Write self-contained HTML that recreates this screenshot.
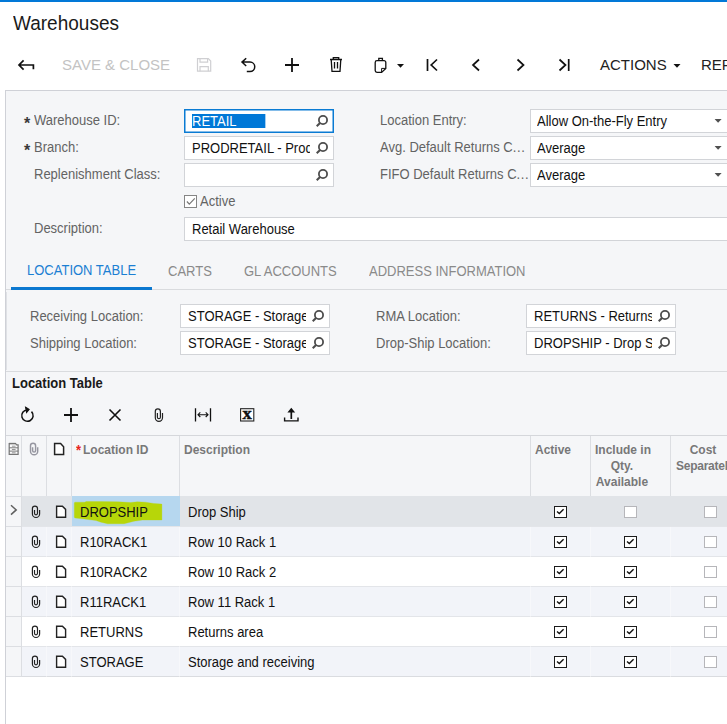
<!DOCTYPE html>
<html lang="en">
<head>
<meta charset="utf-8">
<title>Warehouses</title>
<style>
*{box-sizing:border-box;margin:0;padding:0}
html,body{width:727px;height:724px;overflow:hidden;background:#fff}
body{position:relative;font-family:"Liberation Sans",Arial,sans-serif;font-size:14px;color:#111}
.abs{position:absolute}
.t{position:absolute;white-space:nowrap;line-height:16px;font-size:14px;transform:scaleX(.9286);transform-origin:0 0}
#topbar{left:0;top:0;width:727px;height:2px;background:#0278d7}
#title{left:13px;top:10.5px;font-size:19.7px;line-height:24px;color:#1a1a1a;transform:scaleX(.965)}
.tb{font-size:15px;line-height:18px;top:56px;color:#222;transform:none}
.dis{color:#c3c3c3}
#panel{left:5px;top:90px;width:730px;height:640px;background:#f5f6f8;border:1px solid #cfd1d7}
.lbl{color:#636363}
.inp{position:absolute;height:24px;background:#fff;border:1px solid #d2d4d8;overflow:hidden}
.inp span{position:absolute;left:7px;top:3px;white-space:nowrap;line-height:16px;color:#111;font-size:14px;transform:scaleX(.9286);transform-origin:0 0}
.mag{position:absolute;right:3px;top:4px;width:14px;height:14px}
.tab{color:#8a8a8a;top:263px}
.gh{position:absolute;font-weight:bold;font-size:13px;line-height:16px;color:#787878;white-space:nowrap;transform:scaleX(.923);transform-origin:0 0}
.vsep{position:absolute;width:1px;background:#dcdee2}
.row{position:absolute;left:22px;width:710px;height:30px}
.cell{position:absolute;white-space:nowrap;line-height:16px;font-size:14px;color:#111;transform:scaleX(.9286);transform-origin:0 0}
.cb{position:absolute;width:12.6px;height:12.2px;background:#fff;border:1.2px solid #b6b6ba}
.cb.on{border:1.5px solid #1c1c1c}
</style>
</head>
<body>
<div id="topbar" class="abs"></div>
<div id="title" class="t">Warehouses</div>

<!-- main toolbar -->
<div class="t tb dis" style="left:62px">SAVE &amp; CLOSE</div>
<div class="t tb" style="left:600px">ACTIONS</div>
<div class="t tb" style="left:701px">REPORTS</div>


<!-- main toolbar icons -->
<svg class="abs" style="left:0;top:50px" width="727" height="30" viewBox="0 50 727 30" fill="none" stroke="#111" stroke-width="1.7">
<path d="M23.6 60.4 L19 65 L23.6 69.6 M19 65 H33.4 V69.2"/>
<g stroke="#cfcfd2" stroke-width="1.2"><path d="M197.5 58.6 H208.3 L210.7 61 V71.2 H197.5 Z"/><path d="M200 58.6 V62.2 H207.6 V58.6"/><path d="M200 71.2 V66.6 H208.3 V71.2"/></g>
<path d="M246.2 58.2 L242 62.1 L246.2 66 M242 62.1 H250 A4.75 4.75 0 0 1 250 71.6 H246.8" stroke-width="1.5"/>
<path d="M285 65 H299 M292 58 V72" stroke-width="1.8"/>
<g stroke-width="1.3"><path d="M330 59.5 H342 M333.3 59.5 V57.6 H338.7 V59.5 M331.2 59.5 L332 71.3 H340 L340.8 59.5 M334.5 62 V68.6 M337.5 62 V68.6"/></g>
<g stroke-width="1.3"><path d="M377 60.6 H384 A1.8 1.8 0 0 1 385.8 62.4 V68.4 L381.6 72.4 H377 A1.8 1.8 0 0 1 375.2 70.6 V62.4 A1.8 1.8 0 0 1 377 60.6 Z"/><path d="M378.8 60.6 V58.4 H382.4 V60.6"/><path d="M385.8 68.4 H381.6 V72.4" stroke-width="1"/></g>
<path d="M397 64 H404 L400.5 67.7 Z" fill="#111" stroke="none"/>
<path d="M427.5 59 V71 M437 59.5 L431.2 65 L437 70.5"/>
<path d="M479 59.5 L473 65 L479 70.5"/>
<path d="M517.5 59.5 L523.5 65 L517.5 70.5"/>
<path d="M559.5 59.5 L565.5 65 L559.5 70.5 M568.7 59 V71"/>
<path d="M673.5 64 H680.5 L677 67.7 Z" fill="#111" stroke="none"/>
</svg>
<div id="panel" class="abs"></div>
<svg width="0" height="0" style="position:absolute"><defs>
<g id="mag"><circle cx="7" cy="5.95" r="4.1" fill="none" stroke="#4d4d4d" stroke-width="1.8"/><path d="M4.3 8.7 L0.7 12.3" stroke="#4d4d4d" stroke-width="2.1" stroke-linecap="butt"/></g>
</defs></svg>

<!-- header form -->
<div class="t lbl" style="left:24px;top:116px;font-size:16px;font-weight:bold;color:#3a3a3a;transform:none">*</div>
<div class="t lbl" style="left:34px;top:112px">Warehouse ID:</div>
<div class="t lbl" style="left:24px;top:143px;font-size:16px;font-weight:bold;color:#3a3a3a;transform:none">*</div>
<div class="t lbl" style="left:34px;top:139px">Branch:</div>
<div class="t lbl" style="left:34px;top:166px">Replenishment Class:</div>
<div class="t lbl" style="left:34px;top:220px">Description:</div>

<div class="inp" style="left:184px;top:109px;width:150px;border-color:#0a7bd3;box-shadow:inset 0 0 0 0.5px #0a7bd3"><span><b style="font-weight:normal;background:#0078d7;color:#fff;display:inline-block;width:78.6px;height:14px;line-height:14px;margin-top:1px;white-space:pre">RETAIL</b></span><svg class="mag" viewBox="0 0 14 14"><use href="#mag"/></svg></div>
<div class="inp" style="left:184px;top:136px;width:150px"><span style="width:127.1px;overflow:hidden">PRODRETAIL - Prod</span><svg class="mag" viewBox="0 0 14 14"><use href="#mag"/></svg></div>
<div class="inp" style="left:184px;top:163px;width:150px"><svg class="mag" viewBox="0 0 14 14"><use href="#mag"/></svg></div>
<div class="cb" style="left:184px;top:195px;width:12.8px;height:12.8px;border:1.1px solid #858585"><svg viewBox="0 0 12.8 12.8" width="12.8" height="12.8" style="position:absolute;left:-1.1px;top:-1.1px"><path d="M2.9 6.5 L5.3 9.2 L10.8 3.4" fill="none" stroke="#777" stroke-width="1.2"/></svg></div>
<div class="t lbl" style="left:200px;top:193px">Active</div>
<div class="inp" style="left:184px;top:217px;width:560px"><span>Retail Warehouse</span></div>

<div class="t lbl" style="left:380px;top:112px">Location Entry:</div>
<div class="t lbl" style="left:380px;top:139px">Avg. Default Returns C<i style="font-style:normal;letter-spacing:0.7px">...</i></div>
<div class="t lbl" style="left:380px;top:166px">FIFO Default Returns C<i style="font-style:normal;letter-spacing:0.7px">...</i></div>
<div class="inp" style="left:530px;top:109px;width:210px"><span style="left:6px">Allow On-the-Fly Entry</span></div>
<div class="inp" style="left:530px;top:136px;width:210px"><span style="left:6px">Average</span></div>
<div class="inp" style="left:530px;top:163px;width:210px"><span style="left:6px">Average</span></div>
<svg class="abs" style="left:714px;top:119px" width="8" height="5" viewBox="0 0 8 5"><path d="M0.6 0 H7.6 L4.1 3.7 Z" fill="#505050"/></svg>
<svg class="abs" style="left:714px;top:146px" width="8" height="5" viewBox="0 0 8 5"><path d="M0.6 0 H7.6 L4.1 3.7 Z" fill="#505050"/></svg>
<svg class="abs" style="left:714px;top:173px" width="8" height="5" viewBox="0 0 8 5"><path d="M0.6 0 H7.6 L4.1 3.7 Z" fill="#505050"/></svg>

<!-- tabs -->
<div class="abs" style="left:6px;top:289px;width:730px;height:1px;background:#d9dbde"></div>
<div class="abs" style="left:11px;top:287px;width:141px;height:3px;background:#0b78d0"></div>
<div class="t tab" style="left:27px;top:262px;color:#1b7fd3">LOCATION TABLE</div>
<div class="t tab" style="left:168px">CARTS</div>
<div class="t tab" style="left:244px">GL ACCOUNTS</div>
<div class="t tab" style="left:369px">ADDRESS INFORMATION</div>

<!-- tab form -->
<div class="abs" style="left:6px;top:292px;width:1px;height:78px;background:#dfe1e5"></div>
<div class="t lbl" style="left:30px;top:308px">Receiving Location:</div>
<div class="t lbl" style="left:30px;top:335px">Shipping Location:</div>
<div class="t lbl" style="left:376px;top:308px">RMA Location:</div>
<div class="t lbl" style="left:376px;top:335px">Drop-Ship Location:</div>
<div class="inp" style="left:180px;top:304px;width:150px"><span style="width:127.1px;overflow:hidden">STORAGE - Storage</span><svg class="mag" viewBox="0 0 14 14"><use href="#mag"/></svg></div>
<div class="inp" style="left:180px;top:331px;width:150px"><span style="width:127.1px;overflow:hidden">STORAGE - Storage</span><svg class="mag" viewBox="0 0 14 14"><use href="#mag"/></svg></div>
<div class="inp" style="left:526px;top:304px;width:150px"><span style="width:127.1px;overflow:hidden">RETURNS - Returns</span><svg class="mag" viewBox="0 0 14 14"><use href="#mag"/></svg></div>
<div class="inp" style="left:526px;top:331px;width:150px"><span style="width:127.1px;overflow:hidden">DROPSHIP - Drop Ship</span><svg class="mag" viewBox="0 0 14 14"><use href="#mag"/></svg></div>
<div class="abs" style="left:6px;top:371px;width:730px;height:1px;background:#d9dbde"></div>
<div class="t" style="left:12px;top:375px;font-weight:bold;color:#1a1a1a">Location Table</div>


<!-- grid toolbar -->
<svg class="abs" style="left:0;top:400px" width="320" height="30" viewBox="0 400 320 30" fill="none" stroke="#111" stroke-width="1.6">
<path d="M31.5 411.6 A5.7 5.7 0 1 1 27.2 409.9" stroke-width="1.5"/><path d="M25.6 407.3 L29.1 409.4 L26.6 412.4 Z" stroke-width="1.1" fill="#111"/>
<path d="M64 415 H78 M71 408 V422" stroke-width="1.8"/>
<path d="M109.5 409.5 L120.5 420.5 M120.5 409.5 L109.5 420.5"/>
<path d="M162.50 413.00 V417.80 A3.6 3.6 0 0 1 155.30 417.80 V411.50 A2.55 2.55 0 0 1 160.40 411.50 V417.20 A1.5 1.5 0 0 1 157.40 417.20 V413.00" stroke-width="1.2" stroke="#222"/>
<path d="M195.5 408.2 V421.4 M210.5 408.2 V421.4" stroke-width="1.3"/><path d="M198 414.7 H208 M200.3 412.4 L198 414.7 L200.3 417 M205.7 412.4 L208 414.7 L205.7 417" stroke-width="1.1"/>
<rect x="240.6" y="408.7" width="13.2" height="12.3" stroke-width="1.1" stroke="#222" fill="#fff"/>
<text x="247.2" y="419" text-anchor="middle" transform="translate(247.2 0) scale(1.06 1) translate(-247.2 0)" font-family="Liberation Serif, serif" font-weight="bold" font-size="17.5" fill="#111" stroke="#111" stroke-width="0.45">x</text>
<path d="M291.3 411 V419" stroke-width="1.7"/><path d="M291.3 407.8 L295.2 412.6 H287.4 Z" fill="#111" stroke="none"/><path d="M284.6 417.4 V420.9 H298 V417.4" stroke-width="1.4"/>
</svg>

<!-- grid -->
<div class="abs" style="left:6px;top:435px;width:730px;height:1px;background:#d5d7db"></div>
<div class="abs" style="left:6px;top:496px;width:730px;height:181px;background:#fff"></div>
<div class="abs" style="left:6px;top:677px;width:730px;height:60px;background:#fff"></div>
<div class="abs" style="left:6px;top:496px;width:15px;height:181px;background:#f5f6f8"></div>
<div class="vsep" style="left:21px;top:436px;height:60px"></div>
<div class="vsep" style="left:46px;top:436px;height:60px"></div>
<div class="vsep" style="left:71px;top:436px;height:60px"></div>
<div class="vsep" style="left:179px;top:436px;height:60px"></div>
<div class="vsep" style="left:530px;top:436px;height:60px"></div>
<div class="vsep" style="left:590px;top:436px;height:60px"></div>
<div class="vsep" style="left:670px;top:436px;height:60px"></div>
<div class="gh" style="left:76px;top:442px;color:#e8241c;font-size:14px">*</div>
<div class="gh" style="left:83px;top:442px">Location ID</div>
<div class="gh" style="left:184px;top:442px">Description</div>
<div class="gh" style="left:535px;top:442px">Active</div>
<div class="gh" style="left:594.5px;top:442px;width:58.5px;text-align:center">Include in<br>Qty.<br>Available</div>
<div class="gh" style="left:676px;top:442px;width:58.5px;text-align:center">Cost</div>
<div class="gh" style="left:676px;top:458px;letter-spacing:-0.27px">Separately</div>
<svg class="abs" style="left:0;top:438px" width="72" height="22" viewBox="0 438 72 22" fill="none">
<g stroke="#757575" stroke-width="1.2"><path d="M9.2 443.5 H15.6 L16.6 444.8 H18.1 V454.4 H9.2 Z" fill="#fdfdfe"/><path d="M9 443.6 H15.8" stroke-width="1.5"/><path d="M9.2 447.8 H18.1 M9.2 451.1 H18.1" stroke-width="1"/><path d="M11.9 446.2 H15.6 M11.9 449.5 H15.6 M11.9 452.8 H15.6" stroke-width="0.9" stroke="#8a8a8a"/></g>
<path d="M37.70 447.20 V451.20 A3.6 3.6 0 0 1 30.50 451.20 V445.70 A2.55 2.55 0 0 1 35.60 445.70 V450.60 A1.5 1.5 0 0 1 32.60 450.60 V447.20" stroke="#9696a0" stroke-width="1.45"/>
<path d="M54.6 443.6 H60.6 L63.6 446.8 V454.5 H54.6 Z" fill="#fff" stroke="#222" stroke-width="1.5"/>
</svg>
<div class="row" style="top:496px;background:#e1e4e8"><div class="abs" style="left:50px;top:0;width:108px;height:30px;background:#b6d7ef"></div><svg class="abs" style="left:50px;top:0" width="108" height="30" viewBox="72 496 108 30"><path d="M74.3 503 Q74.3 502.2 75.2 502.2 L84.5 502.2 L86.2 501.5 L100 501.6 L118 501.8 L130.7 502.5 L137.3 501.8 L145.6 502.2 L153.8 503.5 L161.9 504.1 L161.9 520 L142.3 520.1 L134 521.2 L128 522.8 L124.1 523.7 L107.6 523.8 L101 522.2 L96 520.5 L84.5 519.1 L75.4 518.1 Q74.3 518 74.3 517 Z" fill="#b7d609" stroke="#b7d609" stroke-width="0.3" stroke-linejoin="round"/></svg><div class="cell" style="left:58px;top:8px">DROPSHIP</div><div class="cell" style="left:166px;top:8px">Drop Ship</div><div class="cb on" style="left:532.1px;top:10px"><svg viewBox="0 0 12.6 12.2" width="12.6" height="12.2" style="position:absolute;left:-1.5px;top:-1.5px"><path d="M3.0 5.6 L5.3 7.6 L9.6 3.3" fill="none" stroke="#111" stroke-width="1.4"/></svg></div><div class="cb" style="left:602.2px;top:10px"></div><div class="cb" style="left:682.2px;top:10px"></div><svg class="abs" style="left:0;top:0" width="50" height="30" viewBox="22 0 50 30" fill="none"><path d="M39.60 14.10 V17.90 A3.6 3.6 0 0 1 32.40 17.90 V12.60 A2.55 2.55 0 0 1 37.50 12.60 V17.30 A1.5 1.5 0 0 1 34.50 17.30 V14.10" stroke="#222" stroke-width="1.2"/><path d="M56.6 10.2 H62.4 L65.6 13.4 V21.2 H56.6 Z" fill="#fff" stroke="#222" stroke-width="1.4"/></svg></div>
<div class="row" style="top:526px;background:#f2f4f9"><div class="cell" style="left:58px;top:8px">R10RACK1</div><div class="cell" style="left:166px;top:8px">Row 10 Rack 1</div><div class="cb on" style="left:532.1px;top:10px"><svg viewBox="0 0 12.6 12.2" width="12.6" height="12.2" style="position:absolute;left:-1.5px;top:-1.5px"><path d="M3.0 5.6 L5.3 7.6 L9.6 3.3" fill="none" stroke="#111" stroke-width="1.4"/></svg></div><div class="cb on" style="left:602.2px;top:10px"><svg viewBox="0 0 12.6 12.2" width="12.6" height="12.2" style="position:absolute;left:-1.5px;top:-1.5px"><path d="M3.0 5.6 L5.3 7.6 L9.6 3.3" fill="none" stroke="#111" stroke-width="1.4"/></svg></div><div class="cb" style="left:682.2px;top:10px"></div><svg class="abs" style="left:0;top:0" width="50" height="30" viewBox="22 0 50 30" fill="none"><path d="M39.60 14.10 V17.90 A3.6 3.6 0 0 1 32.40 17.90 V12.60 A2.55 2.55 0 0 1 37.50 12.60 V17.30 A1.5 1.5 0 0 1 34.50 17.30 V14.10" stroke="#222" stroke-width="1.2"/><path d="M56.6 10.2 H62.4 L65.6 13.4 V21.2 H56.6 Z" fill="#fff" stroke="#222" stroke-width="1.4"/></svg></div>
<div class="row" style="top:556px;background:#ffffff"><div class="cell" style="left:58px;top:8px">R10RACK2</div><div class="cell" style="left:166px;top:8px">Row 10 Rack 2</div><div class="cb on" style="left:532.1px;top:10px"><svg viewBox="0 0 12.6 12.2" width="12.6" height="12.2" style="position:absolute;left:-1.5px;top:-1.5px"><path d="M3.0 5.6 L5.3 7.6 L9.6 3.3" fill="none" stroke="#111" stroke-width="1.4"/></svg></div><div class="cb on" style="left:602.2px;top:10px"><svg viewBox="0 0 12.6 12.2" width="12.6" height="12.2" style="position:absolute;left:-1.5px;top:-1.5px"><path d="M3.0 5.6 L5.3 7.6 L9.6 3.3" fill="none" stroke="#111" stroke-width="1.4"/></svg></div><div class="cb" style="left:682.2px;top:10px"></div><svg class="abs" style="left:0;top:0" width="50" height="30" viewBox="22 0 50 30" fill="none"><path d="M39.60 14.10 V17.90 A3.6 3.6 0 0 1 32.40 17.90 V12.60 A2.55 2.55 0 0 1 37.50 12.60 V17.30 A1.5 1.5 0 0 1 34.50 17.30 V14.10" stroke="#222" stroke-width="1.2"/><path d="M56.6 10.2 H62.4 L65.6 13.4 V21.2 H56.6 Z" fill="#fff" stroke="#222" stroke-width="1.4"/></svg></div>
<div class="row" style="top:586px;background:#f2f4f9"><div class="cell" style="left:58px;top:8px">R11RACK1</div><div class="cell" style="left:166px;top:8px">Row 11 Rack 1</div><div class="cb on" style="left:532.1px;top:10px"><svg viewBox="0 0 12.6 12.2" width="12.6" height="12.2" style="position:absolute;left:-1.5px;top:-1.5px"><path d="M3.0 5.6 L5.3 7.6 L9.6 3.3" fill="none" stroke="#111" stroke-width="1.4"/></svg></div><div class="cb on" style="left:602.2px;top:10px"><svg viewBox="0 0 12.6 12.2" width="12.6" height="12.2" style="position:absolute;left:-1.5px;top:-1.5px"><path d="M3.0 5.6 L5.3 7.6 L9.6 3.3" fill="none" stroke="#111" stroke-width="1.4"/></svg></div><div class="cb" style="left:682.2px;top:10px"></div><svg class="abs" style="left:0;top:0" width="50" height="30" viewBox="22 0 50 30" fill="none"><path d="M39.60 14.10 V17.90 A3.6 3.6 0 0 1 32.40 17.90 V12.60 A2.55 2.55 0 0 1 37.50 12.60 V17.30 A1.5 1.5 0 0 1 34.50 17.30 V14.10" stroke="#222" stroke-width="1.2"/><path d="M56.6 10.2 H62.4 L65.6 13.4 V21.2 H56.6 Z" fill="#fff" stroke="#222" stroke-width="1.4"/></svg></div>
<div class="row" style="top:616px;background:#ffffff"><div class="cell" style="left:58px;top:8px">RETURNS</div><div class="cell" style="left:166px;top:8px">Returns area</div><div class="cb on" style="left:532.1px;top:10px"><svg viewBox="0 0 12.6 12.2" width="12.6" height="12.2" style="position:absolute;left:-1.5px;top:-1.5px"><path d="M3.0 5.6 L5.3 7.6 L9.6 3.3" fill="none" stroke="#111" stroke-width="1.4"/></svg></div><div class="cb on" style="left:602.2px;top:10px"><svg viewBox="0 0 12.6 12.2" width="12.6" height="12.2" style="position:absolute;left:-1.5px;top:-1.5px"><path d="M3.0 5.6 L5.3 7.6 L9.6 3.3" fill="none" stroke="#111" stroke-width="1.4"/></svg></div><div class="cb" style="left:682.2px;top:10px"></div><svg class="abs" style="left:0;top:0" width="50" height="30" viewBox="22 0 50 30" fill="none"><path d="M39.60 14.10 V17.90 A3.6 3.6 0 0 1 32.40 17.90 V12.60 A2.55 2.55 0 0 1 37.50 12.60 V17.30 A1.5 1.5 0 0 1 34.50 17.30 V14.10" stroke="#222" stroke-width="1.2"/><path d="M56.6 10.2 H62.4 L65.6 13.4 V21.2 H56.6 Z" fill="#fff" stroke="#222" stroke-width="1.4"/></svg></div>
<div class="row" style="top:646px;background:#f2f4f9"><div class="cell" style="left:58px;top:8px">STORAGE</div><div class="cell" style="left:166px;top:8px">Storage and receiving</div><div class="cb on" style="left:532.1px;top:10px"><svg viewBox="0 0 12.6 12.2" width="12.6" height="12.2" style="position:absolute;left:-1.5px;top:-1.5px"><path d="M3.0 5.6 L5.3 7.6 L9.6 3.3" fill="none" stroke="#111" stroke-width="1.4"/></svg></div><div class="cb on" style="left:602.2px;top:10px"><svg viewBox="0 0 12.6 12.2" width="12.6" height="12.2" style="position:absolute;left:-1.5px;top:-1.5px"><path d="M3.0 5.6 L5.3 7.6 L9.6 3.3" fill="none" stroke="#111" stroke-width="1.4"/></svg></div><div class="cb" style="left:682.2px;top:10px"></div><svg class="abs" style="left:0;top:0" width="50" height="30" viewBox="22 0 50 30" fill="none"><path d="M39.60 14.10 V17.90 A3.6 3.6 0 0 1 32.40 17.90 V12.60 A2.55 2.55 0 0 1 37.50 12.60 V17.30 A1.5 1.5 0 0 1 34.50 17.30 V14.10" stroke="#222" stroke-width="1.2"/><path d="M56.6 10.2 H62.4 L65.6 13.4 V21.2 H56.6 Z" fill="#fff" stroke="#222" stroke-width="1.4"/></svg></div>
<div class="abs" style="left:22px;top:526px;width:710px;height:1px;background:#e3e5e9"></div>
<div class="abs" style="left:6px;top:526px;width:16px;height:1px;background:#dcdee2"></div>
<div class="abs" style="left:22px;top:556px;width:710px;height:1px;background:#e3e5e9"></div>
<div class="abs" style="left:6px;top:556px;width:16px;height:1px;background:#dcdee2"></div>
<div class="abs" style="left:22px;top:586px;width:710px;height:1px;background:#e3e5e9"></div>
<div class="abs" style="left:6px;top:586px;width:16px;height:1px;background:#dcdee2"></div>
<div class="abs" style="left:22px;top:616px;width:710px;height:1px;background:#e3e5e9"></div>
<div class="abs" style="left:6px;top:616px;width:16px;height:1px;background:#dcdee2"></div>
<div class="abs" style="left:22px;top:646px;width:710px;height:1px;background:#e3e5e9"></div>
<div class="abs" style="left:6px;top:646px;width:16px;height:1px;background:#dcdee2"></div>
<div class="abs" style="left:22px;top:676px;width:710px;height:1px;background:#dadce0"></div>
<div class="abs" style="left:6px;top:676px;width:16px;height:1px;background:#dcdee2"></div>
<div class="abs" style="left:6px;top:496px;width:16px;height:1px;background:#dcdee2"></div>
<div class="vsep" style="left:21px;top:497px;height:180px"></div>
<div class="abs" style="left:46px;top:527px;width:1px;height:150px;background:rgba(255,255,255,.4)"></div>
<div class="abs" style="left:71px;top:527px;width:1px;height:150px;background:rgba(255,255,255,.4)"></div>
<div class="abs" style="left:179px;top:527px;width:1px;height:150px;background:rgba(255,255,255,.4)"></div>
<div class="abs" style="left:530px;top:527px;width:1px;height:150px;background:rgba(255,255,255,.4)"></div>
<div class="abs" style="left:590px;top:527px;width:1px;height:150px;background:rgba(255,255,255,.4)"></div>
<div class="abs" style="left:670px;top:527px;width:1px;height:150px;background:rgba(255,255,255,.4)"></div>
<svg class="abs" style="left:8px;top:502px" width="12" height="16" viewBox="8 502 12 16" fill="none"><path d="M11 505.2 L16.2 509.9 L11 514.6" stroke="#606060" stroke-width="1.5"/></svg>
</body>
</html>
